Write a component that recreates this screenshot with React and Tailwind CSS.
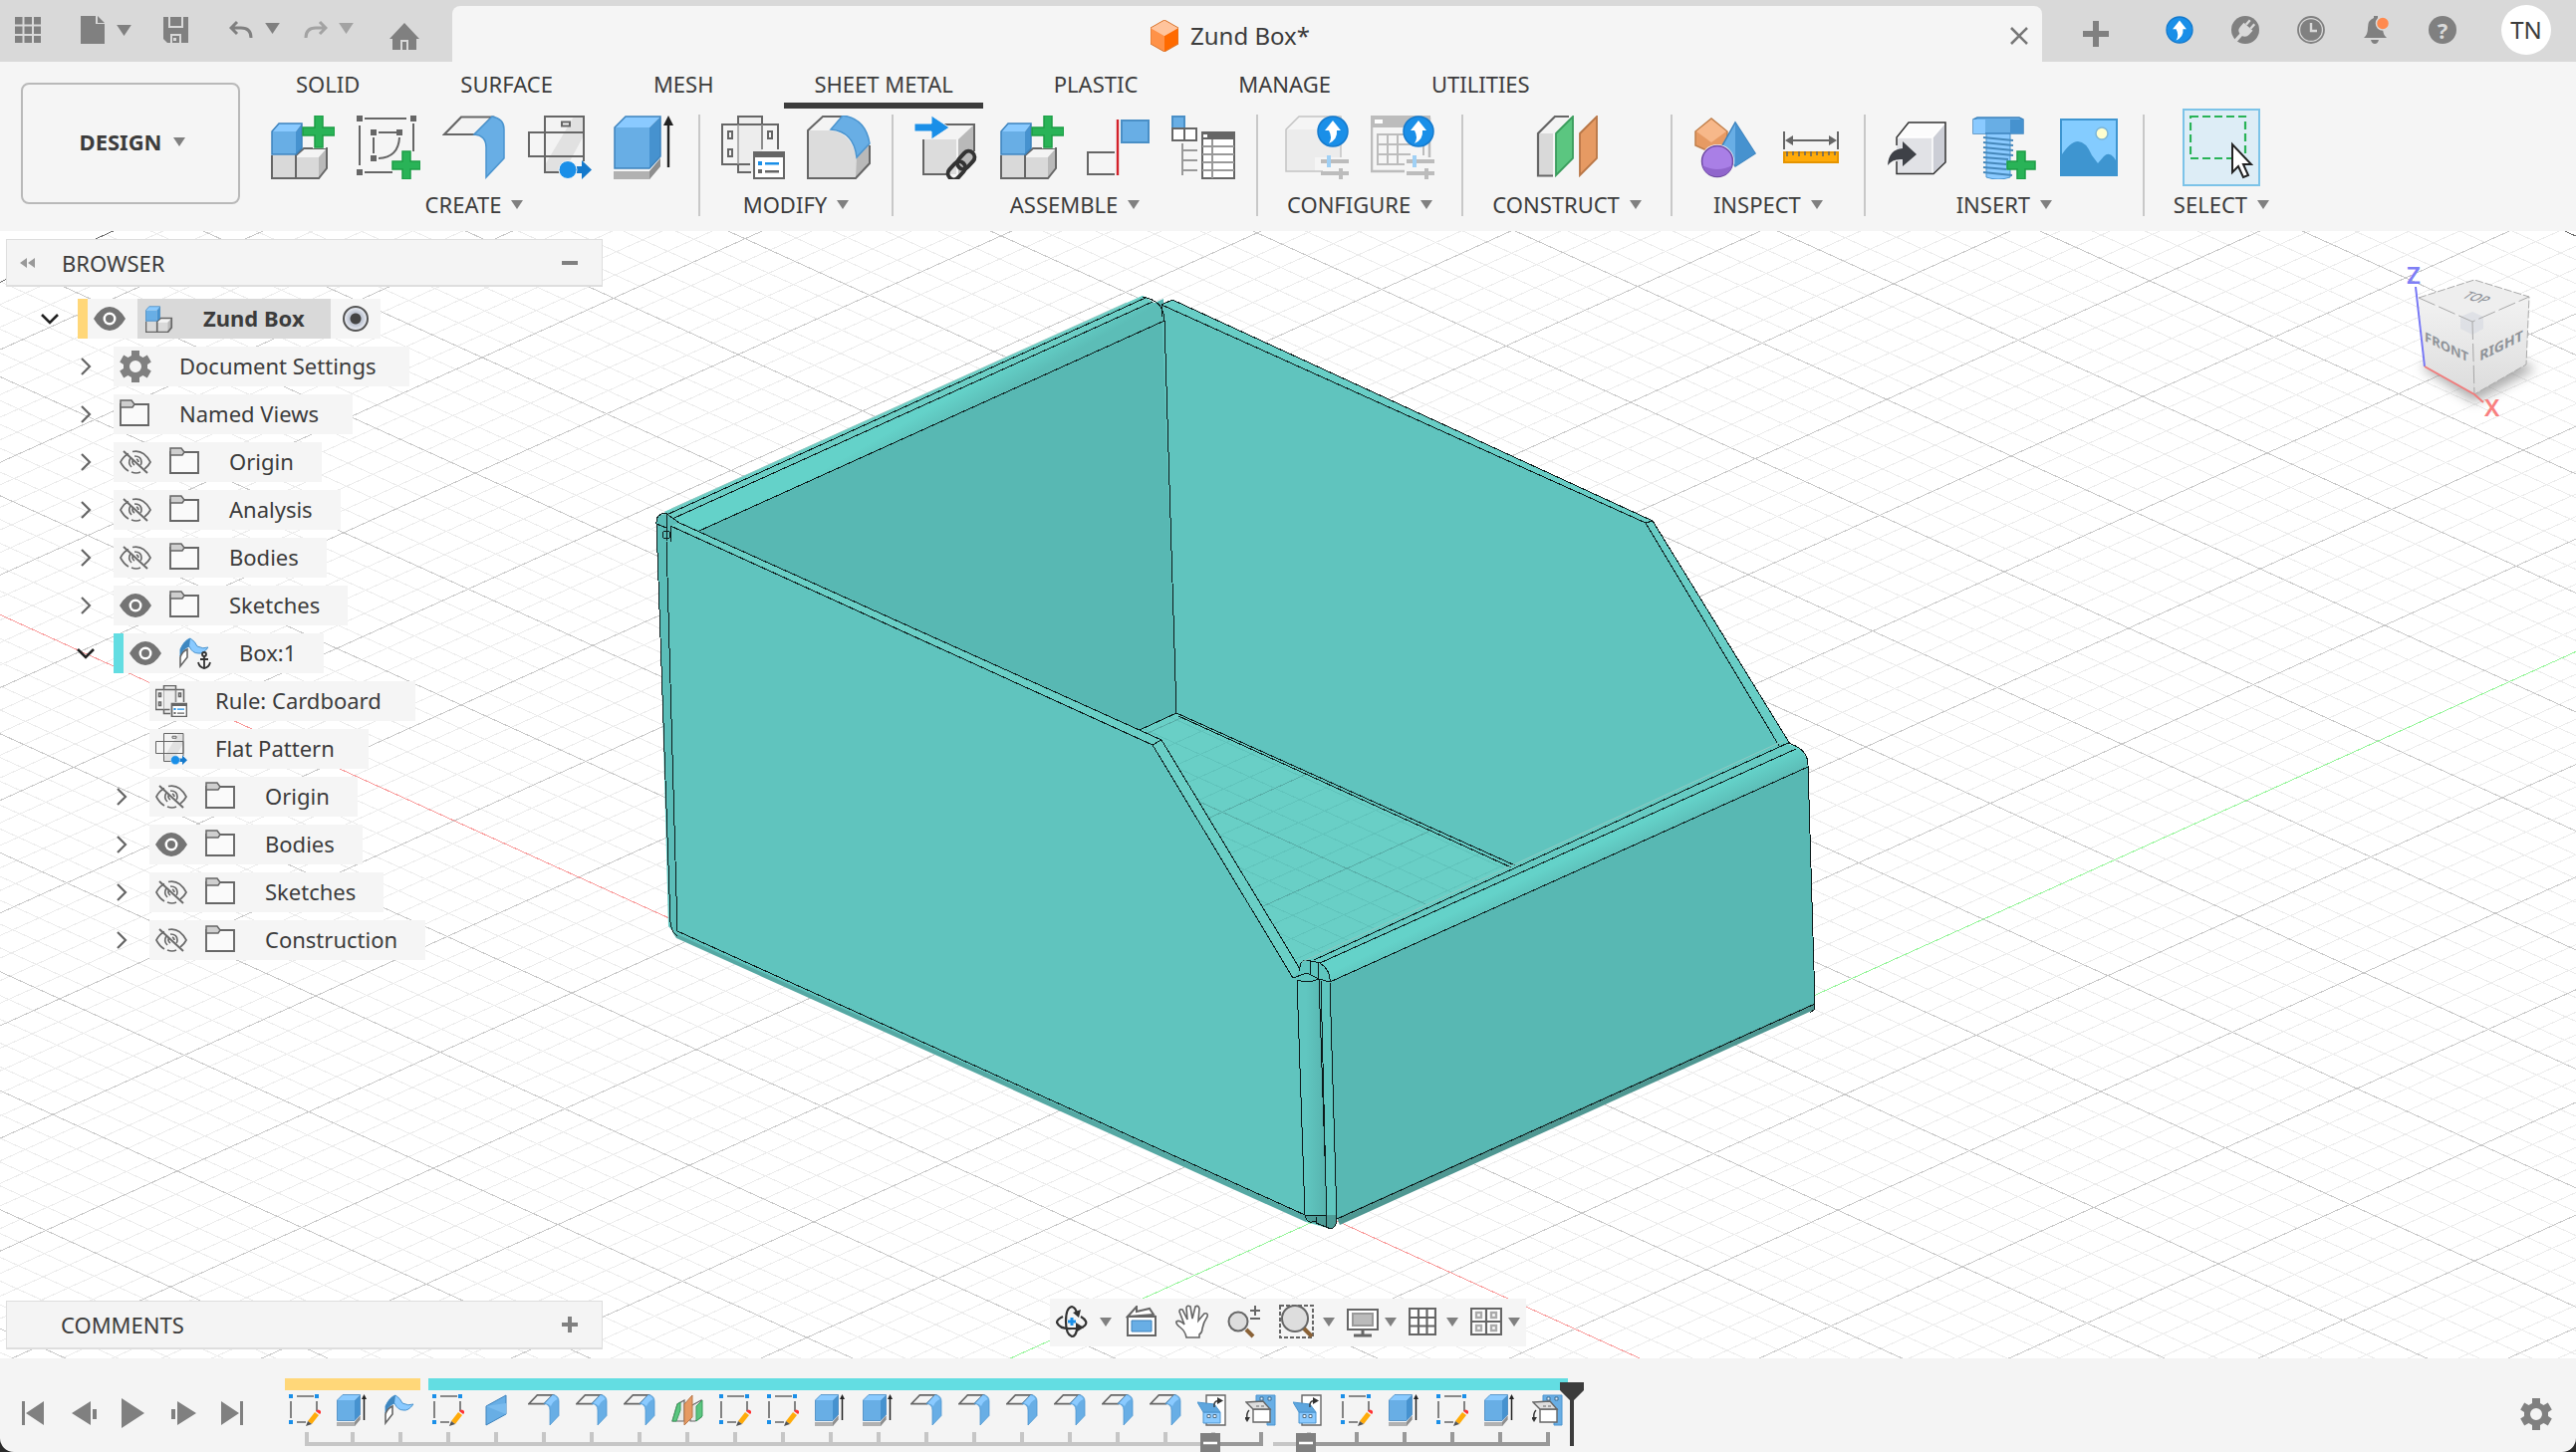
import React from "react";

const G = "#666666";
const M = "#808080";

/* ---------- shared drawing helpers ---------- */
const Svg = ({ s = 64, vb = 64, className = "", children }) => (
  <svg width={s} height={s} viewBox={`0 0 ${vb} ${vb}`} fill="none" className={`shrink-0 ${className}`} aria-hidden="true">
    {children}
  </svg>
);
const Caret = ({ color = M, big = false }) => (
  <svg width={big ? 15 : 12} height={big ? 11 : 9} viewBox="0 0 12 9" className="shrink-0" aria-hidden="true">
    <path d="M0 0h12L6 9z" fill={color} />
  </svg>
);
const Plus = ({ x, y, r = 16 }) => (
  <path
    d={`M${x - 4} ${y - r}h8v${r - 4}h${r - 4}v8h${4 - r}v${r - 4}h-8v${4 - r}h${4 - r}v-8h${r - 4}z`}
    fill="#29b357" stroke="#1c9d45" strokeWidth="1.5"
  />
);
const UpBadge = ({ x, y, r = 15 }) => (
  <g transform={`translate(${x} ${y}) scale(${r / 15})`}>
    <circle r="15" fill="#1a8fe8" stroke="#1479cc" strokeWidth="1.5" />
    <path d="M0 -11L8 -1H4Q5 8 -4 12Q0 6 -4 -1H-8z" fill="#fff" />
  </g>
);

/* ---------- modelling icons ---------- */
const Component = ({ s, plus }) => (
  <Svg s={s}>
    <path d="M25 40L32 33H56V53L48 63H1V40z" fill="#d9d9d9" />
    <path d="M25 40L33 33H56L48 42H25z" fill="#f4f4f4" />
    <path d="M48 42L56 33V53L48 63z" fill="#b9b9b9" />
    <path d="M1 40V63H48L56 53V33H33L25 40V63" stroke={G} strokeWidth={s < 40 ? 3.5 : 2} />
    <path d="M1 16H25V39H1z" fill="#68aee5" />
    <path d="M1 16L8 8H31L25 16z" fill="#8acaff" />
    <path d="M25 16L31 8V33L25 39z" fill="#4692cf" />
    <path d="M1 39V16L8 8H31V33L25 39z" stroke="#3c82bd" strokeWidth="1.5" />
    {plus && <path d="M42 0H55V9H64V23H55V33H42V23H32V9H42z" fill="#f5f5f5" />}
    {plus && <Plus x={48} y={16} />}
  </Svg>
);
const SketchAdd = () => (
  <Svg>
    <path d="M3 10V50M8 3H50M57 8V36M8 57H36M17 22V38M22 17H40M43 22Q42 42 22 43" stroke={G} strokeWidth="2" />
    <path d="M0 0h6v6H0zM54 0h6v6h-6zM0 54h6v6H0zM14 14h6v6h-6zM40 14h6v6h-6zM14 40h6v6h-6z" fill={G} />
    <Plus x={50} y={50} r={14} />
  </Svg>
);
const Flange = ({ s }) => (
  <Svg s={s}>
    <path d="M2 19L19 1.500H50L33 19z" fill="#f4f4f4" stroke={G} strokeWidth={s < 40 ? 3.5 : 2.2} />
    <path d="M50 1Q62 3 62 14V43L44 62V32Q44 20 32 19z" fill="#68aee5" stroke="#4a94cf" strokeWidth="1.5" />
    {s < 40 && <path d="M49 2Q56 3 59 10Q50 14 46 24Q42 19 35 18z" fill="#8acaff" />}
  </Svg>
);
const FlatPattern = ({ s }) => (
  <Svg s={s}>
    <path d="M17 1H56V41H17z" fill="#f3f3f3" />
    <path d="M46 1H56V20L36 57H18V48z" fill="#e1e1e1" />
    <path d="M56 46V1H17V57H34M1 17H56V41H1zM17 17V41M34 6.500h8v4h-8z" stroke={G} strokeWidth="2" />
    <path d="M44 51H54V45L64 54.500L54 64V58H44z" fill="#1479cc" />
    <circle cx="40" cy="54.500" r="9" fill="#1a8fe8" stroke="#f5f5f5" strokeWidth="1" />
  </Svg>
);
const Extrude = ({ s }) => (
  <Svg s={s}>
    <path d="M0 56H36L47 43V51L36 64H0z" fill="#b1b1b1" />
    <path d="M36 56L47 43V51L36 64z" fill="#8e8e8e" />
    <path d="M1 12H36V53H1z" fill="#68aee5" />
    <path d="M1 12L12 1H47L36 12z" fill="#8acaff" />
    <path d="M36 12L47 1V41L36 53z" fill="#4692cf" />
    <path d="M1 53V12L12 1H47V41L36 53z" stroke="#3c82bd" strokeWidth="1.500" />
    <path d="M55 52V8" stroke="#222" strokeWidth={s < 40 ? 3 : 2.4} />
    <path d="M50 10L55 0L60 10z" fill="#222" />
  </Svg>
);
const Rule = ({ s }) => (
  <Svg s={s}>
    <path d="M17 1H41V57H17z" fill="#ededed" />
    <path d="M29 49H1V9H57V34M17 9V1H41V34M17 49V57H30M7 16h4v7H7zM47 16h4v7h-4zM7 34h4v7H7z" stroke={G} strokeWidth={s < 40 ? 3 : 2} />
    <path d="M17 9V49M41 9V34" stroke="#999" strokeWidth="1.500" />
    <path d="M33 37H63V63H33z" fill="#fff" stroke={G} strokeWidth={s < 40 ? 3.5 : 2} />
    <path d="M32 36H64V42H32z" fill={G} />
    <path d="M37 46h4v4h-4z M44 47h14v2.500h-14z" fill="#1a8fe8" />
    <path d="M37 54h4v4h-4z M44 55h14v2.500h-14z" fill={G} />
  </Svg>
);
const Bend = () => (
  <Svg>
    <path d="M1 15H24Q44 17 50 42L63 30V48L49 63H1z" fill="#dcdcdc" />
    <path d="M1 15L16 1H36L24 15z" fill="#f4f4f4" />
    <path d="M50 42L63 28V48L49 63z" fill="#b9b9b9" />
    <path d="M36 1H16L1 15V63H49L63 48V30" stroke={G} strokeWidth="2" />
    <path d="M24 14L36 0Q59 3 63 28L50 42Q47 16 24 14z" fill="#68aee5" stroke="#4a94cf" strokeWidth="1.500" />
  </Svg>
);
const ImportLink = () => (
  <Svg>
    <path d="M9 24H42V59H9z" fill="#dcdcdc" />
    <path d="M9 24L24 9H60L44 24z" fill="#f4f4f4" />
    <path d="M44 24L60 9V43L44 59z" fill="#b9b9b9" />
    <path d="M30 9H60V36M9 24V59H32" stroke={G} strokeWidth="2" />
    <path d="M0 8H17V0L35 12L17 24V16H0z" fill="#1a8fe8" stroke="#f5f5f5" strokeWidth="1" />
    <g transform="translate(47 50) rotate(-48)" stroke="#333" strokeWidth="4">
      <rect x="-17" y="-6" width="20" height="12" rx="6" />
      <rect x="-3" y="-6" width="20" height="12" rx="6" />
    </g>
  </Svg>
);
const Joint = () => (
  <Svg>
    <path d="M29 37H2V59H29" stroke={G} strokeWidth="2" />
    <path d="M32 4V60" stroke="#d3222a" strokeWidth="2.400" />
    <path d="M36 5H63V27H36z" fill="#68aee5" stroke="#4a8fc6" strokeWidth="2" />
  </Svg>
);
const Bom = () => (
  <Svg>
    <path d="M1 1H13V13H1z" fill="#68aee5" stroke="#4a8fc6" strokeWidth="2" />
    <path d="M1 13H13V25H1zM13 13H25V25H13z" fill="#fff" stroke={G} strokeWidth="2" />
    <path d="M11 28V60M11 35H26M11 45H26M11 55H26" stroke="#999" strokeWidth="2" />
    <path d="M31 18H63V63H31z" fill="#fff" stroke={G} strokeWidth="2" />
    <path d="M30 16H64V24H30z" fill={G} />
    <path d="M31 31H63M31 39H63M31 47H63M31 55H63M41 24V63" stroke="#999" strokeWidth="2" />
    <path d="M32 19h4v3h-4z" fill="#fff" />
  </Svg>
);
const Sliders = () => (
  <g>
    <path d="M36 46H64M36 58H64" stroke="#bcbcbc" strokeWidth="4" />
    <path d="M44 40V52" stroke="#9fd0f5" strokeWidth="4" />
    <path d="M56 53V64" stroke="#bcbcbc" strokeWidth="4" />
  </g>
);
const ConfigCube = () => (
  <Svg>
    <path d="M1 14L14 1H56V42H30V56H1z" fill="#ececec" />
    <path d="M1 14L14 1H56L44 14z" fill="#f5f5f5" />
    <path d="M38 56H1V14L14 1H56V42" stroke="#c4c4c4" strokeWidth="1.500" />
    <Sliders />
    <UpBadge x={48} y={16} />
  </Svg>
);
const ConfigTable = () => (
  <Svg>
    <path d="M1 3H59V42M1 3V56H34" stroke="#bcbcbc" strokeWidth="2.500" />
    <path d="M0 0H60V12H0z" fill="#bcbcbc" />
    <path d="M4 4h8v4H4z" fill="#fff" />
    <path d="M7 19H36M7 29H52M7 39H40M7 49H34M7 18V50M17 18V50M27 18V50M53 30V40" stroke="#bcbcbc" strokeWidth="2" />
    <Sliders />
    <UpBadge x={48} y={16} />
  </Svg>
);
const Planes = () => (
  <Svg>
    <path d="M3 18L20 1H36L20 18z" fill="#f4f4f4" />
    <path d="M3 18H18V60H3z" fill="#d9d9d9" />
    <path d="M18 60.500H3V18L20 1H34" stroke={G} strokeWidth="2.200" />
    <path d="M21 18L38 1V43L21 60z" fill="#5bc680" stroke="#3a9c5c" strokeWidth="1.800" />
    <path d="M45 18L62 1V43L45 60z" fill="#e69a63" stroke="#b87646" strokeWidth="1.800" />
  </Svg>
);
const Shapes = () => (
  <Svg>
    <path d="M2 16L18 3L34 16V26L20 38L2 30z" fill="#e69a63" stroke="#c07f4b" strokeWidth="1.500" />
    <path d="M18 4L33 16L18 27L3 16z" fill="#f7b88a" />
    <path d="M42 7L62 38L42 51L28 32z" fill="#68aee5" stroke="#3c82bd" strokeWidth="1.500" />
    <path d="M42 7L62 38L42 51z" fill="#4692cf" />
    <circle cx="24" cy="46" r="17" fill="#f5f5f5" />
    <circle cx="24" cy="46" r="15.500" fill="#a97fe6" stroke="#6f4ba3" strokeWidth="1.500" />
    <path d="M9 50Q24 58 39 50Q36 61 24 61Q12 61 9 50z" fill="#9065cc" />
  </Svg>
);
const Ruler = () => (
  <Svg>
    <path d="M5 16V34M59 16V34M8 25H56" stroke={G} strokeWidth="2" />
    <path d="M6 25l8-5v10zM58 25l-8-5v10z" fill={G} />
    <path d="M5 37H59V47H5z" fill="#ffab0a" stroke="#e59400" strokeWidth="2" />
    <path d="M8 36v5M14 36v4M20 36v5M26 36v4M32 36v5M38 36v4M44 36v5M50 36v4M56 36v4" stroke={G} strokeWidth="1.600" />
  </Svg>
);
const InsertDerive = () => (
  <Svg>
    <path d="M10 22H46V58H10z" fill="#e1e2e6" />
    <path d="M10 22L22 7H59L46 22z" fill="#fcfcfc" />
    <path d="M46 22L59 7V47L46 58z" fill="#ccced6" />
    <path d="M46 22V58M46 22L58 8M10 22H46" stroke="#fff" strokeWidth="1.500" />
    <path d="M10 30V22L22 7H59V47L47 58.500H10V46" stroke="#333" strokeWidth="1.500" />
    <path d="M1 50Q2 34 16 33V26L30 39L16 51V44Q6 43 1 50z" fill="#3e4147" />
  </Svg>
);
const Bolt = () => (
  <Svg>
    <path d="M14 17H38V62Q26 66 14 62z" fill="#8acaff" stroke="#4a94cf" strokeWidth="1" />
    <path d="M11 22L41 25M11 27L41 30M11 32L41 35M11 37L41 40M11 42L36 44M11 47L34 49M11 52L34 54M11 57L40 60" stroke="#4688bb" strokeWidth="2" />
    <path d="M1 4L5 2H47L51 4V18H1z" fill="#68aee5" stroke="#3c82bd" strokeWidth="1.500" />
    <path d="M1 4H13V18H1z" fill="#8acaff" />
    <path d="M38 4H51V18H38z" fill="#4692cf" />
    <Plus x={49} y={50} r={14} />
  </Svg>
);
const Picture = () => (
  <Svg>
    <path d="M2 3H60V61H2z" fill="#84ccff" />
    <path d="M2 42Q12 26 20 26Q28 26 34 40L40 48L46 41Q51 36 56 42L60 48V61H2z" fill="#3e95d0" />
    <path d="M3 4H59V60H3z" stroke="#3e95d0" strokeWidth="2" />
    <ellipse cx="44" cy="18" rx="6" ry="6" fill="#ffffcf" stroke="#7db6d8" strokeWidth="1.500" />
  </Svg>
);
const SelectIcon = () => (
  <Svg>
    <path d="M1 1H56V43H1z" stroke="#29b357" strokeWidth="2.200" strokeDasharray="8 4" />
    <path d="M43 29V57L49 51L54 62L59 60L54 49H62z" fill="#fff" stroke="#222" strokeWidth="2" />
  </Svg>
);

/* ---------- timeline & tree icons (32 px) ---------- */
const Sketch32 = () => (
  <Svg s={32} vb={32}>
    <path d="M2 7V24M8 2H25M28 7V17M8 28H17" stroke={G} strokeWidth="1.600" />
    <path d="M0 0h4v4H0zM26 0h4v4h-4zM0 26h4v4H0z" fill="#1a8fe8" />
    <path d="M19 27L26 18L30 21L23 30z" fill="#ffab0a" />
    <path d="M27 17L29 15.500Q33 16 32 19L31 20z" fill="#f33" />
    <path d="M19 27L23 30L17 32z" fill="#555" />
  </Svg>
);
const Surface32 = ({ anchor }) => (
  <Svg s={32} vb={32}>
    <path d="M1 12Q5 3 11 1Q16 4 18 9Q24 12 29 10Q24 17 19 16Q13 16 10 9Q4 11 1 19z" fill="#8acaff" stroke="#4a94cf" />
    <path d="M1 12Q5 3 11 1L10 9Q4 11 1 19z" fill="#3e87c0" />
    <path d="M1 20V29L8 20V12Q3 14 1 20z" fill="#fff" stroke={G} strokeWidth="1.600" />
    {anchor && (
      <g stroke="#333" strokeWidth="1.800">
        <circle cx="25" cy="17" r="2" />
        <path d="M25 19V30M21 22H29M19 25Q20 30 25 31Q30 30 31 25" />
      </g>
    )}
  </Svg>
);
const Plane32 = () => (
  <Svg s={32} vb={32}>
    <path d="M6 12L26 1V20L6 31z" fill="#68aee5" stroke="#3c82bd" />
    <path d="M6 12L26 20V9z" fill="#7abbee" />
  </Svg>
);
const Mirror32 = () => (
  <Svg s={32} vb={32}>
    <path d="M1 27L6 10L13 6V27zM19 27V12L30 6V23L24 27z" fill="#e8e8e8" stroke={G} strokeWidth="1.200" />
    <path d="M1 27L6 10L9 8V16L5 27zM25 12L31 6V22L25 27z" fill="#5bc680" stroke="#3a9c5c" />
    <path d="M13 10L21 1V23L13 31z" fill="#e69a63" stroke="#b87646" />
  </Svg>
);
const Unfold32 = () => (
  <Svg s={32} vb={32}>
    <path d="M9 1H28V31H9z" fill="#fff" stroke={G} strokeWidth="1.400" />
    <path d="M6 18H23V29H6z" fill="#8acaff" stroke="#4a94cf" />
    <path d="M0 8L17 10L23 18H6z" fill="#5ea6de" stroke="#4a94cf" />
    <path d="M10 20.500h3v3h-3zM16 20.500h3v3h-3z" stroke="#4f6f88" fill="#fff" />
    <path d="M17 13Q16 7 21 6.500" stroke="#333" strokeWidth="1.400" />
    <path d="M20 3L26 6.500L20 10z" fill="#333" />
  </Svg>
);
const Refold32 = () => (
  <Svg s={32} vb={32}>
    <path d="M11 1H30V31H22V14L11 8z" fill="#68aee5" stroke="#4a94cf" />
    <path d="M15 3h3v3h-3zM23 3h3v3h-3z" stroke="#3b6c92" fill="#e8f4ff" />
    <path d="M8 15H25V28H8z" fill="#fff" stroke={G} strokeWidth="1.400" />
    <path d="M1 8L18 7L25 15H8z" fill="#dedede" stroke={G} strokeWidth="1.400" />
    <path d="M11 12H20" stroke={G} strokeWidth="1.200" strokeDasharray="3 2" />
    <path d="M4 16Q1 19 2 25" stroke="#333" strokeWidth="1.400" />
    <path d="M-1 23L5 23L2 28z" fill="#333" />
  </Svg>
);
const Eye = () => (
  <Svg s={32} vb={32}>
    <path d="M0 16Q7 4 16 4Q25 4 32 16Q25 28 16 28Q7 28 0 16z" fill="#747474" />
    <circle cx="16" cy="16" r="6.500" fill="#fff" />
    <circle cx="16" cy="16" r="4" fill="#747474" />
  </Svg>
);
const EyeOff = () => (
  <Svg s={32} vb={32}>
    <g stroke="#6b6b6b" strokeWidth="1.700">
      <path d="M9 7.500Q4 10 1 16Q4 22 9 25M13 5.500Q24 3 31 16Q29 20 25 23M12 26Q17 28 21 26" />
      <path d="M11 12Q8 17 12 21M15 10Q22 10 22 16Q22 18 21 19M13.500 14Q12 17 15 19M17 13Q19 14 19 16" />
      <path d="M4 5L28 27" strokeWidth="2" />
    </g>
  </Svg>
);
const Folder = () => (
  <Svg s={32} vb={32}>
    <path d="M1 6H29V27H1z" fill="#fafafa" stroke={G} strokeWidth="1.900" />
    <path d="M1 8V2H12L15 6L13 9H1z" fill="#cfcfcf" stroke={G} strokeWidth="1.500" />
  </Svg>
);
const Gear = () => (
  <Svg s={32} vb={32}>
    <path
      fill={M}
      fillRule="evenodd"
      d="M12 0h8v5l3.500 2 4.300-2.500 4 6.900L28 14v4l3.800 2.600-4 6.900L23.500 25 20 27v5h-8v-5l-3.500-2-4.300 2.500-4-6.900L4 18v-4L.2 11.400l4-6.900L8.500 7 12 5zM16 10a6 6 0 100 12 6 6 0 000-12z"
    />
  </Svg>
);
const Chevron = ({ open }) => (
  <Svg s={20} vb={20}>
    {open ? <path d="M2 6L10 14L18 6" stroke="#222" strokeWidth="2.600" /> : <path d="M6 2L14 10L6 18" stroke="#666" strokeWidth="2.200" />}
  </Svg>
);

/* ---------- title bar ---------- */
function TitleBar() {
  return (
    <header className="flex h-[62px] bg-[#d9d9d9]">
      <div className="flex w-[454px] shrink-0 items-start pl-[15px] pt-4">
        <button aria-label="Data panel" className="mr-[38px]">
          <Svg s={28} vb={28}>
            <path d="M0 1h7.500v7.500H0zM9.500 1H17v7.500H9.500zM19 1h7v7.500h-7zM0 10.500h7.500V18H0zM9.500 10.500H17V18H9.500zM19 10.500h7V18h-7zM0 20h7.500v7H0zM9.500 20H17v7H9.500zM19 20h7v7h-7z" fill={M} />
          </Svg>
        </button>
        <button aria-label="File" className="mr-8 flex items-center gap-2">
          <Svg s={28} vb={28}>
            <path d="M0 0H15V8H24V28H0zM17 0L24 7H17z" fill={M} />
          </Svg>
          <Caret big />
        </button>
        <button aria-label="Save" className="mr-[38px]">
          <Svg s={28} vb={28}>
            <path fillRule="evenodd" d="M0 1H5V12H20V1H25V27H4L0 23zM7 1H18V10H7zM7 18V27H18V18z" fill={M} />
            <path d="M9 20H16V27H9z" fill={M} />
            <path d="M10 22h3v3h-3z" fill="#d9d9d9" />
          </Svg>
        </button>
        <button aria-label="Undo" className="mr-[23px] flex items-center gap-[11px]">
          <Svg s={25} vb={25}>
            <path d="M8 6L2 12L8 18M2 12H12Q22 12 22 22" stroke={M} strokeWidth="3" />
          </Svg>
          <Caret big />
        </button>
        <button aria-label="Redo" className="mr-9 flex items-center gap-[11px]">
          <Svg s={25} vb={25}>
            <path d="M17 6L23 12L17 18M23 12H13Q3 12 3 22" stroke="#a3a3a3" strokeWidth="3" />
          </Svg>
          <Caret big color="#a3a3a3" />
        </button>
        <button aria-label="Home" className="mt-[6px]">
          <Svg s={30} vb={30}>
            <path fillRule="evenodd" d="M15 1L30 17H27V28H19V18H11V28H3V17H0zM13 20h4v8h-4z" fill={M} />
          </Svg>
        </button>
      </div>
      <div className="mt-[6px] flex flex-1 items-center rounded-t-lg bg-[#f5f5f5] pr-2 pt-1">
        <div className="flex flex-1 items-center justify-center gap-3 pl-1 text-2xl">
          <svg width="28" height="32" viewBox="0 0 28 32" aria-hidden="true">
            <path d="M0 8L14 0L28 8L14 16z" fill="#ffc49c" />
            <path d="M0 8L14 16V32L0 24z" fill="#ff9248" />
            <path d="M28 8L14 16V32L28 24z" fill="#ff6a00" />
            <path d="M0 8L14 0L28 8V24L14 32L0 24z" fill="none" stroke="#d9742c" strokeWidth="1" />
          </svg>
          Zund Box*
        </div>
        <button aria-label="Close tab" className="p-[5px]">
          <Svg s={20} vb={20}><path d="M2 2L18 18M18 2L2 18" stroke="#777" strokeWidth="2.600" /></Svg>
        </button>
      </div>
      <div className="flex w-[536px] shrink-0 items-start pl-[41px]">
        <button aria-label="New tab" className="mt-[21px] mr-[57px]">
          <Svg s={26} vb={26}><path d="M13 0V26M0 13H26" stroke={M} strokeWidth="6" /></Svg>
        </button>
        <div className="mt-4 flex gap-[38px]">
          <button aria-label="Updates">
            <Svg s={28} vb={28}><UpBadge x={14} y={14} r={13} /></Svg>
          </button>
          <button aria-label="Extensions">
            <Svg s={28} vb={28}>
              <circle cx="14" cy="14" r="14" fill={M} />
              <g transform="translate(15 13) rotate(42)">
                <path d="M-6 -3H6V2Q6 8 0 8Q-6 8 -6 2z" fill="#d9d9d9" />
                <path d="M-3 -3V-9M3 -3V-9" stroke="#d9d9d9" strokeWidth="2.400" />
                <path d="M0 7V18" stroke="#d9d9d9" strokeWidth="3.500" />
              </g>
            </Svg>
          </button>
          <button aria-label="Job status">
            <Svg s={28} vb={28}>
              <circle cx="14" cy="14" r="13" stroke={M} strokeWidth="1.800" />
              <circle cx="14" cy="14" r="10.800" fill={M} />
              <path d="M14 7V15H20" stroke="#d9d9d9" strokeWidth="2.400" />
            </Svg>
          </button>
          <button aria-label="Notifications">
            <Svg s={28} vb={28}>
              <path d="M1 22Q5 19 5 12Q5 4 11 2V0H15V2Q20 4 20 12Q20 19 24 22z" fill={M} />
              <path d="M8 24H16Q15 28 12 28Q9 28 8 24z" fill={M} />
              <circle cx="20" cy="7.500" r="6.500" fill="#ff8a4f" stroke="#d9d9d9" strokeWidth="1.500" />
            </Svg>
          </button>
          <button aria-label="Help" className="flex h-7 w-7 items-center justify-center rounded-full bg-[#808080] text-[22px] font-bold leading-7 text-[#d9d9d9]">
            ?
          </button>
        </div>
        <button aria-label="Account" className="ml-[45px] mt-[5px] flex h-[50px] w-[50px] items-center justify-center rounded-full bg-white text-2xl">
          TN
        </button>
      </div>
    </header>
  );
}

/* ---------- ribbon ---------- */
const tabs = ["SOLID", "SURFACE", "MESH", "SHEET METAL", "PLASTIC", "MANAGE", "UTILITIES"];
const groups = [
  ["CREATE", [["New Component", <Component s={64} plus />], ["Create Sketch", <SketchAdd />], ["Flange", <Flange s={64} />], ["Flat Pattern", <FlatPattern s={64} />], ["Extrude", <Extrude s={64} />]]],
  ["MODIFY", [["Sheet Metal Rules", <Rule s={64} />], ["Fillet", <Bend />]]],
  ["ASSEMBLE", [["Insert Component", <ImportLink />], ["Assemble Component", <Component s={64} plus />], ["Joint", <Joint />], ["Bill of Materials", <Bom />]]],
  ["CONFIGURE", [["Configure Model", <ConfigCube />], ["Configuration Table", <ConfigTable />]]],
  ["CONSTRUCT", [["Offset Plane", <Planes />]]],
  ["INSPECT", [["Interference", <Shapes />], ["Measure", <Ruler />]]],
  ["INSERT", [["Insert Derive", <InsertDerive />], ["Insert Fastener", <Bolt />], ["Canvas", <Picture />]]],
];
const GroupLabel = ({ children }) => (
  <button className="flex h-9 items-center justify-center gap-[10px] px-[15px]">
    {children}
    <Caret />
  </button>
);
function Ribbon() {
  return (
    <section className="flex bg-[#f5f5f5]">
      <button className="ml-[21px] mt-[21px] flex h-[122px] w-[220px] shrink-0 items-center justify-center gap-3 rounded-lg border-2 border-[#b9b9b9] pb-1 pl-1 font-bold">
        DESIGN <Caret />
      </button>
      <div className="ml-[10px] flex-1">
        <nav className="flex h-[47px] gap-[41px] pl-4">
          {tabs.map((t) => (
            <button key={t} className={`border-b-6 px-[30px] pt-0.5 ${t === "SHEET METAL" ? "border-[#3c3c3c]" : "border-transparent"}`}>
              {t}
            </button>
          ))}
        </nav>
        <div className="flex pb-[9px]">
          {groups.map(([name, items]) => (
            <div key={name} className="flex">
              <div className="flex flex-col items-center px-[14px]">
                <div className="flex gap-2">
                  {items.map(([label, icon]) => (
                    <button key={label} aria-label={label} className="flex h-[78px] w-[78px] items-center justify-center">
                      {icon}
                    </button>
                  ))}
                </div>
                <GroupLabel>{name}</GroupLabel>
              </div>
              <div className="mb-[6px] mt-[6px] w-[2px] bg-[#c8c8c8]" />
            </div>
          ))}
          <div className="flex flex-col items-center px-[14px]">
            <button aria-label="Select" className="flex h-[78px] w-[78px] items-center justify-center border-2 border-[#7cc3e8] bg-[#ddedf6]">
              <SelectIcon />
            </button>
            <GroupLabel>SELECT</GroupLabel>
          </div>
        </div>
      </div>
    </section>
  );
}

/* ---------- 3D canvas ---------- */
const OX = 1331, OY = 1221;
const pt = (a, b) => [OX + 125 * a + 132 * b, OY + 56.7 * a - 59.6 * b];
const lineD = (p, q) => `M${p[0].toFixed(1)} ${p[1].toFixed(1)}L${q[0].toFixed(1)} ${q[1].toFixed(1)}`;
const A0 = -13.6, A1 = 16, B0 = -14, B1 = 13;
let minor = "", major = "";
for (let i = -68; i <= 80; i++) {
  const d = lineD(pt(i / 5, B0), pt(i / 5, B1));
  if (i % 5 === 0) major += d; else minor += d;
}
for (let i = -70; i <= 65; i++) {
  const d = lineD(pt(A0, i / 5), pt(A1, i / 5));
  if (i % 5 === 0) major += d; else minor += d;
}
const border = lineD(pt(A0, B0), pt(A0, B1)) + lineD(pt(A0, B1), pt(A1, B1));

function Scene() {
  return (
    <svg className="absolute inset-0 h-full w-full" viewBox="0 232 2586 1132" preserveAspectRatio="xMidYMid slice" fill="none" role="img" aria-label="Sheet metal box model">
      <defs>
        <linearGradient id="rimA" gradientUnits="userSpaceOnUse" x1="918" y1="408" x2="934" y2="436">
          <stop offset="0.3" stopColor="#64d2c9" />
          <stop offset="1" stopColor="#5cbdb7" />
        </linearGradient>
        <linearGradient id="rimB" gradientUnits="userSpaceOnUse" x1="1563" y1="857" x2="1576" y2="884">
          <stop offset="0.3" stopColor="#64d2c9" />
          <stop offset="1" stopColor="#5cbdb7" />
        </linearGradient>
        <linearGradient id="edgeV" x1="0" y1="0" x2="1" y2="0">
          <stop offset="0.3" stopColor="#60c6c0" />
          <stop offset="1" stopColor="#57b3ae" />
        </linearGradient>
        <clipPath id="floor"><path d="M1181 716L1522 869L1319 964L1305 973L1166 743L1144 733z" /></clipPath>
      </defs>
      <g shapeRendering="crispEdges">
        <path d={minor} stroke="#ececec" />
        <path d={major} stroke="#c9c9c9" />
        <path d={border} stroke="#6e6e6e" />
        <path d={lineD(pt(A0, 0), pt(A1, 0))} stroke="#f99a9a" />
        <path d={lineD(pt(0, B0), pt(0, B1))} stroke="#96f59a" />
      </g>

      <path d="M669 540L682 525L1168 300L1182 716L1144 735z" fill="#58b8b3" />
      <path d="M1181 716L1522 869L1319 966L1305 975L1166 743L1144 733z" fill="#69cfc6" />
      <g clipPath="url(#floor)" shapeRendering="crispEdges">
        <path d={minor} stroke="#60c3bb" />
        <path d={major} stroke="#57aca6" />
      </g>
      <path d="M1166 306L1177 301L1659 523L1797 747L1522 872L1181 716z" fill="#60c4be" />
      <path d="M1166 306L1177 301L1659 523L1797 747L1786 749L1652 525z" fill="#68cec6" />

      <path d="M667 514L1147 297L1157 303Q1168 309 1169 322L702 533L677 522z" fill="url(#rimA)" />
      <path d="M667 514L1147 297L1157 303L677 521z" fill="#6bcec5" />

      <path d="M660 526L682 525L1166 743L1305 973L1311 1224L679 939L671 930z" fill="#60c4be" />
      <path d="M675 936L1311 1221V1227L679 942z" fill="#55a8a3" />
      <path d="M659 526Q658 516 668 516L677 520L682 525L673 528L669 543L680 937L673 932z" fill="#5bbdb8" />
      <path d="M673 528L682 525L1166 743L1305 973L1298 982L1157 748z" fill="#6acfc6" />

      <path d="M1335 986L1815 770L1822 1008L1342 1224z" fill="#58b8b3" />
      <path d="M1342 1223L1822 1007L1821 1014L1345 1230z" fill="#4f9792" />
      <path d="M1309 964L1790 746L1803 749Q1815 756 1815 770L1335 986L1325 967z" fill="url(#rimB)" />
      <path d="M1309 964L1790 746L1803 752L1325 967z" fill="#66cbc3" />
      <path d="M1302 984L1306 968Q1309 963 1319 964L1327 969Q1336 976 1335 986L1342 1224L1336 1234L1311 1227z" fill="#5fc6bf" />
      <path d="M1302 984H1324L1332 1220L1310 1220z" fill="url(#edgeV)" />
      <path d="M1310 1220H1342L1341 1231L1336 1234L1321 1228L1315 1228z" fill="#4d9c97" />

      <g stroke="#0c1a1a" strokeWidth="1" strokeLinejoin="round" shapeRendering="crispEdges">
        <path d="M669 517L1150 299M677 520L1157 303M702 533L1169 322M1147 298Q1169 302 1169 322L1181 716" />
        <path d="M1166 318V306L1177 301L1659 523L1797 747M1166 306L1652 525L1786 749M1652 525L1659 523" />
        <path d="M1144 733L1181 716L1521 869M1183 719L1517 871" />
        <path d="M682 525L1166 743L1305 973M673 528L1157 748L1298 982M1157 748L1166 743" />
        <path d="M659 526Q658 516 668 515L682 525M659 526L673 926Q674 936 680 940M669 517V543L680 935L1310 1220M659 526L669 530M673 528V544" />
        <circle cx="669" cy="537" r="4" />
        <path d="M1319 964L1795 746M1325 967L1803 752M1335 986L1815 770M1795 746Q1815 752 1815 768L1822 1008L1821 1014L1817 1017M1822 1008L1342 1224" />
        <path d="M1305 975Q1304 964 1312 964L1325 967Q1336 974 1335 986L1342 1224M1302 984L1310 1220Q1312 1230 1321 1226M1302 984Q1313 988 1324 983L1332 1220M1326 984L1332 1232M1298 982L1312 977L1324 983L1335 986M1315 964V978M1323 967V982M1310 1220H1332M1321 1222V1228L1336 1234Q1342 1232 1342 1224" />
      </g>
      <path d="M1307 966L1790 744M1131 304L674 511" stroke="#8fc9c2" />
    </svg>
  );
}

function ViewCube() {
  return (
    <svg className="absolute right-[10px] top-[24px]" width="190" height="180" viewBox="2386 256 190 180" fill="none" role="img" aria-label="View cube">
      <defs>
        <filter id="soft" x="-30%" y="-30%" width="160%" height="160%"><feGaussianBlur stdDeviation="6" /></filter>
        <linearGradient id="faceL" x1="0" y1="0" x2="0" y2="1"><stop offset="0" stopColor="#f2f2f2" /><stop offset="1" stopColor="#dcdcdc" /></linearGradient>
      </defs>
      <path d="M2430 368L2484 344L2546 370L2484 404z" fill="#8c8c8c" opacity="0.7" filter="url(#soft)" />
      <path d="M2428 299L2484 281L2539 298L2482 323z" fill="#eeeeee" />
      <path d="M2428 299L2482 323L2484 396L2434 368z" fill="url(#faceL)" />
      <path d="M2539 298L2482 323L2484 396L2536 366z" fill="url(#faceL)" />
      <path d="M2470 318L2482 313L2493 318V330L2482 336L2470 330z" fill="#d9dbe2" opacity="0.7" />
      <path d="M2428 299L2484 281L2539 298L2536 366L2484 396" stroke="#aaa" strokeDasharray="8 2" />
      <path d="M2428 299L2482 323L2539 298M2482 323L2484 396" stroke="#a8a8a8" strokeDasharray="18 4" />
      <path d="M2425 288L2434 368" stroke="#7878f5" strokeWidth="2" />
      <path d="M2434 368L2484 396L2493 404" stroke="#f07c7c" strokeWidth="2" />
      <g fontWeight="700" fill="#8f9399" textAnchor="middle">
        <text transform="translate(2456 353) skewY(26)" fontSize="13">FRONT</text>
        <text transform="translate(2511 352) skewY(-26)" fontSize="14">RIGHT</text>
        <text transform="translate(2482 302) rotate(16) skewX(-38)" fontSize="12" fontWeight="500">TOP</text>
      </g>
      <text x="2416" y="285" fontSize="24" fontWeight="600" fill="#7f7ff5">Z</text>
      <text x="2494" y="418" fontSize="24" fontWeight="600" fill="#f98080">X</text>
    </svg>
  );
}

/* ---------- browser tree ---------- */
const rows = [
  { icons: [<Gear />], label: "Document Settings", wide: true },
  { icons: [<Folder />], label: "Named Views", wide: true },
  { icons: [<EyeOff />, <Folder />], label: "Origin" },
  { icons: [<EyeOff />, <Folder />], label: "Analysis" },
  { icons: [<EyeOff />, <Folder />], label: "Bodies" },
  { icons: [<Eye />, <Folder />], label: "Sketches" },
  { icons: [<Eye />, <Surface32 anchor />], label: "Box:1", open: true, bar: true },
  { leaf: true, icons: [<Rule s={32} />], label: "Rule: Cardboard", wide: true },
  { leaf: true, icons: [<FlatPattern s={32} />], label: "Flat Pattern", wide: true },
  { nested: true, icons: [<EyeOff />, <Folder />], label: "Origin" },
  { nested: true, icons: [<Eye />, <Folder />], label: "Bodies" },
  { nested: true, icons: [<EyeOff />, <Folder />], label: "Sketches" },
  { nested: true, icons: [<EyeOff />, <Folder />], label: "Construction" },
];
function Browser() {
  return (
    <aside className="relative flex flex-col items-start pt-2">
      <div className="ml-[6px] flex h-12 w-[599px] items-center border border-b-2 border-[#dedede] bg-[#f4f4f4] pl-[13px] pr-6">
        <button aria-label="Collapse browser">
          <Svg s={16} vb={16}><path d="M0 8L7 3V13zM8 8L15 3V13z" fill="#999" /></Svg>
        </button>
        <h2 className="ml-[26px] flex-1">BROWSER</h2>
        <button aria-label="Minimize browser">
          <Svg s={16} vb={16}><path d="M0 6h16v4H0z" fill={M} /></Svg>
        </button>
      </div>
      <ul className="mt-3 flex flex-col items-start gap-2">
        <li className="flex h-10 items-center pl-10">
          <button aria-label="Collapse Zund Box" className="mr-[18px]"><Chevron open /></button>
          <span className="h-full w-[10px] bg-[#ffd779]" />
          <button aria-label="Toggle Zund Box" className="flex h-full items-center bg-[#f5f5f5] pl-[6px] pr-3"><Eye /></button>
          <span className="flex h-full items-center bg-[#d9d9d9] pb-0.5 pl-2 pr-[26px] font-bold">
            <span className="mr-[28px]"><Component s={30} /></span>Zund Box
          </span>
          <label className="relative flex h-full items-center bg-[#f5f5f5] px-3">
            <input type="radio" defaultChecked aria-label="Activate Zund Box" className="h-[26px] w-[26px] appearance-none rounded-full border-2 border-[#555] bg-[radial-gradient(circle,#444_0_5px,#c3c9d6_6px_7px,#e8ebf2_11px)]" />
          </label>
        </li>
        {rows.map((r, i) => (
          <li key={i} className={`flex h-10 items-center ${r.leaf ? "pl-[150px]" : r.nested ? "pl-[112px]" : "pl-[76px]"}`}>
            {!r.leaf && (
              <button aria-label={`Expand ${r.label}`} className="mr-[18px]"><Chevron open={r.open} /></button>
            )}
            {r.bar && <span className="h-full w-[10px] bg-[#63dde2]" />}
            <span className={`flex h-full items-center bg-[#f5f5f5] pl-[6px] ${r.wide ? "pr-[34px]" : "pr-[28px]"}`}>
              <span className="mr-[28px] flex gap-[18px]">
                {r.icons.map((ic, k) => <span key={k}>{ic}</span>)}
              </span>
              <span className="pb-0.5">{r.label}</span>
            </span>
          </li>
        ))}
      </ul>
    </aside>
  );
}

/* ---------- navigation bar ---------- */
function NavBar() {
  return (
    <div className="absolute bottom-3 left-1/2 flex h-12 -translate-x-1/2 items-center bg-[#f5f5f5] px-[6px] pb-0.5">
      <button aria-label="Orbit" className="flex items-center gap-2">
        <Svg s={36} vb={36}>
          <g stroke="#333" strokeWidth="2.200">
            <path d="M21 26Q20 33 16 33Q10 31 10 18Q10 4 16 3Q20 4 21 10" />
            <path d="M7 13Q1 16 1 19Q4 26 16 25H24M25 13Q33 18 29 22Q27 24 25 24" />
          </g>
          <path d="M17 9L25 6L23 14zM20 19L28 24L20 29z" fill="#333" />
          <path d="M16 14V22M12 18H20" stroke="#1a8fe8" strokeWidth="3" />
        </Svg>
        <Caret />
      </button>
      <button aria-label="Look at" className="ml-[14px]">
        <Svg s={32} vb={32}>
          <path d="M2 11L11 1V6L24 3L28 9z" fill="#fff" stroke={G} strokeWidth="2" />
          <path d="M2 11H30V30H2z" fill="#fff" stroke={G} strokeWidth="2" />
          <path d="M6 15H26V26H6z" fill="#68aee5" stroke="#3c82bd" />
        </Svg>
      </button>
      <button aria-label="Pan" className="ml-[18px]">
        <Svg s={34} vb={34}>
          <path d="M11 33Q10 27 5 23Q0 19 1 17Q4 15 9 20L4 7Q4 4 7 5L12 15L11 3Q12 0 15 2L17 14L20 2Q23 0 24 4L23 16L29 9Q33 8 32 12Q28 18 27 24Q27 28 24 30V33z" fill="#fff" stroke={G} strokeWidth="1.600" />
        </Svg>
      </button>
      <button aria-label="Zoom" className="ml-[18px]">
        <Svg s={34} vb={34}>
          <circle cx="11" cy="17" r="9.500" fill="#ddd" stroke={G} strokeWidth="2" />
          <path d="M19 25L26 32" stroke="#8a6237" strokeWidth="4" />
          <path d="M28 1V11M23 6H33M23 14H33" stroke={G} strokeWidth="2" />
        </Svg>
      </button>
      <button aria-label="Fit" className="ml-[18px] flex items-center gap-2">
        <Svg s={36} vb={36}>
          <path d="M1 2H34V34H1z" stroke={G} strokeWidth="2" strokeDasharray="4 2" />
          <circle cx="16" cy="15" r="13" fill="#ddd" stroke={G} strokeWidth="2" />
          <path d="M25 25L33 33" stroke="#8a6237" strokeWidth="4" />
        </Svg>
        <Caret />
      </button>
      <button aria-label="Display settings" className="ml-3 flex items-center gap-[6px]">
        <Svg s={32} vb={32}>
          <path d="M1 4H31V24H1z" fill="#fff" stroke={G} strokeWidth="2" />
          <path d="M6 8H26V20H6z" fill="#bbb" stroke="#999" strokeWidth="2" />
          <path d="M16 25V29M7 30H25" stroke={G} strokeWidth="3" />
        </Svg>
        <Caret />
      </button>
      <button aria-label="Grid settings" className="ml-3 flex items-center gap-[10px]">
        <Svg s={28} vb={28}>
          <path d="M1 1H27V27H1zM10 1V27M18.500 1V27M1 10H27M1 18.500H27" stroke={G} strokeWidth="2.200" fill="#fff" />
        </Svg>
        <Caret />
      </button>
      <button aria-label="Viewports" className="ml-3 flex items-center gap-[6px]">
        <Svg s={32} vb={32}>
          <path d="M1 3H31V29H1zM16 3V29M1 16H31" stroke={G} strokeWidth="2.200" fill="#fff" />
          <path d="M6 7H11V12H6zM21 7H26V12H21zM6 20H11V25H6zM21 20H26V25H21z" stroke="#aaa" strokeWidth="2.400" />
        </Svg>
        <Caret />
      </button>
    </div>
  );
}

/* ---------- timeline ---------- */
const kinds = {
  s: ["Sketch", <Sketch32 />], e: ["Extrude", <Extrude s={32} />], w: ["Surface", <Surface32 />], p: ["Plane", <Plane32 />],
  f: ["Flange", <Flange s={32} />], m: ["Mirror", <Mirror32 />], u: ["Unfold", <Unfold32 />], r: ["Refold", <Refold32 />],
};
const order = "s e w s p f f f m s s e e f f f f f f u r u s e s e r".split(" ");

const transport = [
  ["Go to start", "M0 3h3v24H0zM22 3v24L4 15z"],
  ["Step back", "M19 3v24L0 15zM21 11h4v10h-4z"],
  ["Play", "M0 0L23 15L0 30z"],
  ["Step forward", "M0 11h4v10H0zM6 3v24L25 15z"],
  ["Go to end", "M0 3v24L18 15zM19 3h3v24h-3z"],
];
function Timeline() {
  return (
    <footer className="flex h-[94px] shrink-0 items-start rounded-b-[14px] bg-[#f4f4f4] pl-[22px] pr-6">
      <div className="mt-10 flex gap-[25px]">
        {transport.map(([l, d]) => (
          <button key={l} aria-label={l}>
            <svg width="25" height="30" viewBox="0 0 25 30" aria-hidden="true"><path d={d} fill={M} /></svg>
          </button>
        ))}
      </div>
      <div className="ml-[39px] mt-5 flex flex-1">
        <div className="flex flex-col">
          <div className="flex gap-2">
            <span className="h-3 w-[136px] bg-[#ffd779]" />
            <span className="h-3 flex-1 bg-[#63dde2]" />
          </div>
          <div className="mt-1 flex gap-4 pl-1">
            {order.map((k, i) => (
              <button key={i} aria-label={kinds[k][0]}>{kinds[k][1]}</button>
            ))}
          </div>
          <svg className="mt-[6px]" width="1288" height="20" viewBox="286 1438 1288 20" fill="none" aria-hidden="true">
            {order.map((k, i) => (
              <path key={i} d={`M${308 + i * 48 - (i > 0 ? 2 : 0)} 1438v12`} stroke={i >= 20 && i !== 21 ? "#999" : "#c6c6c6"} strokeWidth="4" />
            ))}
            <path d="M306 1450H1206M1278 1450H1302" stroke="#c6c6c6" strokeWidth="4" />
            <path d="M1225 1450H1268M1321 1450H1556" stroke="#999" strokeWidth="4" />
            <path d="M1205 1439h20v19h-20zM1301 1439h20v19h-20z" fill={M} />
            <path d="M1208 1449h14M1304 1449h14" stroke="#fff" strokeWidth="2.500" />
          </svg>
        </div>
        <svg className="-ml-2 mt-1" width="24" height="66" viewBox="0 0 24 66" aria-label="Timeline marker">
          <path d="M0 0H24V8L14 18V64H10V18L0 8z" fill="#3c3c3c" />
        </svg>
      </div>
      <button aria-label="Timeline settings" className="mt-10"><Gear /></button>
    </footer>
  );
}

export default function App() {
  return (
    <div className="flex min-h-screen flex-col bg-[#2a2a2a] font-['Noto_Sans',sans-serif] text-[22px] leading-7 text-[#3c3c3c]">
      <TitleBar />
      <Ribbon />
      <main className="relative flex flex-1 flex-col overflow-hidden bg-white">
        <Scene />
        <ViewCube />
        <Browser />
        <section className="relative mb-[9px] ml-[6px] mt-auto flex h-[49px] w-[599px] items-center border border-b-2 border-[#dedede] bg-[#f4f4f4] pl-[54px] pr-6">
          <h2 className="flex-1">COMMENTS</h2>
          <button aria-label="Expand comments">
            <Svg s={16} vb={16}><path d="M8 0V16M0 8H16" stroke={M} strokeWidth="4" /></Svg>
          </button>
        </section>
        <NavBar />
      </main>
      <Timeline />
    </div>
  );
}
